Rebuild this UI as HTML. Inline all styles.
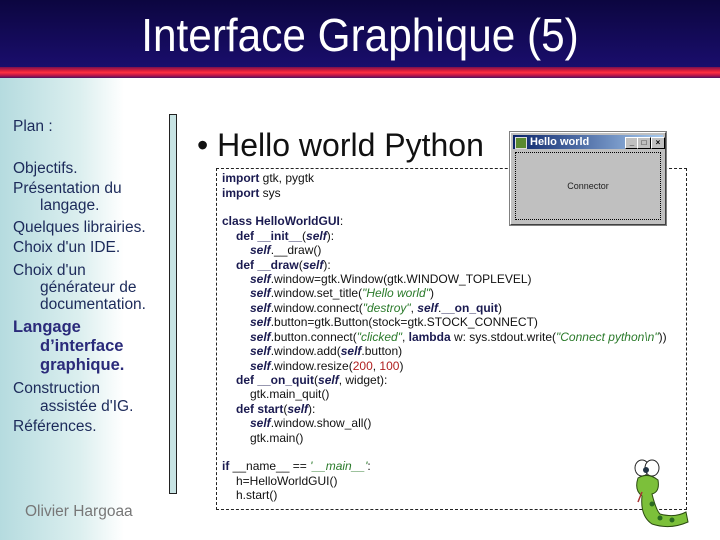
<!DOCTYPE html>
<html><head><meta charset="utf-8"><style>
*{margin:0;padding:0}
body{width:720px;height:540px;position:relative;overflow:hidden;background:#fff;font-family:"Liberation Sans",sans-serif}
.hdr{position:absolute;left:0;top:0;width:720px;height:70px;background:linear-gradient(#0c0640,#1a0e6e)}
.red{position:absolute;left:0;top:67px;width:720px;height:11px;background:linear-gradient(#7a1050,#e0203a 35%,#ff3040 50%,#c01848 75%,#501060)}
.title{position:absolute;left:0;width:720px;top:8px;text-align:center;color:#fff;font-size:46px;transform:scaleX(.92)}
.side{position:absolute;left:0;top:78px;width:200px;height:462px;background:linear-gradient(90deg,#b5dbdf,#dcefef 40%,#fff 62%)}
.s{position:absolute;font-size:15.5px;color:#1c2a5a;white-space:nowrap}
.b{font-weight:bold;font-size:16.5px;color:#2a2a7a}
.bar{position:absolute;left:169px;top:114px;width:6px;height:378px;background:#c7e3e3;border:1px solid #222}
.code{position:absolute;left:216px;top:168px;width:469px;height:340px;border:1px dashed #222}
.c{position:absolute;font-size:12px;color:#111;white-space:nowrap}
.k{font-weight:bold;color:#1a1a50}
.sf{font-weight:bold;font-style:italic;color:#1a1a50}
.st{font-style:italic;color:#2a7a2a}
.n{color:#b02020}
.win{position:absolute;left:510px;top:132px;width:154px;height:91px;background:#c0c0c0;border:1px solid #fff;border-right-color:#404040;border-bottom-color:#404040;outline:1px solid #808080}
.tb{position:absolute;left:2px;top:2px;width:150px;height:14px;background:linear-gradient(90deg,#0a246a,#a6caf0)}
.tb span{position:absolute;left:17px;top:0;color:#fff;font-weight:bold;font-size:11px;line-height:14px}
.ico{position:absolute;left:2px;top:2px;width:10px;height:10px;background:#5a8a30;border:1px solid #ddd}
.btn{position:absolute;top:2px;width:12px;height:10px;background:#c0c0c0;border:1px solid #fff;border-right-color:#000;border-bottom-color:#000;font-size:8px;line-height:10px;text-align:center;color:#000;font-weight:bold}
.inner{position:absolute;left:4px;top:19px;width:144px;height:66px;border:1px dotted #000;font-size:9px;text-align:center;line-height:66px;color:#222}
</style></head><body>
<div class="hdr"></div><div class="red"></div>
<div class="title">Interface Graphique (5)</div>
<div class="side"></div>
<div class="s" style="left:13px;top:118px">Plan :</div>
<div class="s" style="left:13px;top:160px">Objectifs.</div>
<div class="s" style="left:13px;top:180px">Présentation du</div>
<div class="s" style="left:40px;top:197px">langage.</div>
<div class="s" style="left:13px;top:219px">Quelques librairies.</div>
<div class="s" style="left:13px;top:239px">Choix d'un IDE.</div>
<div class="s" style="left:13px;top:262px">Choix d'un</div>
<div class="s" style="left:40px;top:279px">générateur de</div>
<div class="s" style="left:40px;top:296px">documentation.</div>
<div class="s b" style="left:13px;top:318px">Langage</div>
<div class="s b" style="left:40px;top:337px">d’interface</div>
<div class="s b" style="left:40px;top:356px">graphique.</div>
<div class="s" style="left:13px;top:380px">Construction</div>
<div class="s" style="left:40px;top:398px">assistée d'IG.</div>
<div class="s" style="left:13px;top:418px">Références.</div>
<div class="s" style="left:25px;top:503px;color:#777">Olivier Hargoaa</div>
<div class="bar"></div>
<div style="position:absolute;left:197px;top:127px;font-size:32px;color:#111;white-space:nowrap">• Hello world Python</div>
<div class="code"></div>
<div class="c" style="left:222px;top:171px"><span class="k">import</span> gtk, pygtk</div>
<div class="c" style="left:222px;top:186px"><span class="k">import</span> sys</div>
<div class="c" style="left:222px;top:214px"><span class="k">class</span> <span class="k">HelloWorldGUI</span>:</div>
<div class="c" style="left:236px;top:229px"><span class="k">def __init__</span>(<span class="sf">self</span>):</div>
<div class="c" style="left:250px;top:243px"><span class="sf">self</span>.__draw()</div>
<div class="c" style="left:236px;top:258px"><span class="k">def __draw</span>(<span class="sf">self</span>):</div>
<div class="c" style="left:250px;top:272px"><span class="sf">self</span>.window=gtk.Window(gtk.WINDOW_TOPLEVEL)</div>
<div class="c" style="left:250px;top:286px"><span class="sf">self</span>.window.set_title(<span class="st">"Hello world"</span>)</div>
<div class="c" style="left:250px;top:301px"><span class="sf">self</span>.window.connect(<span class="st">"destroy"</span>, <span class="sf">self</span>.<span class="k">__on_quit</span>)</div>
<div class="c" style="left:250px;top:315px"><span class="sf">self</span>.button=gtk.Button(stock=gtk.STOCK_CONNECT)</div>
<div class="c" style="left:250px;top:330px"><span class="sf">self</span>.button.connect(<span class="st">"clicked"</span>, <span class="k">lambda</span> w: sys.stdout.write(<span class="st">"Connect python\n"</span>))</div>
<div class="c" style="left:250px;top:344px"><span class="sf">self</span>.window.add(<span class="sf">self</span>.button)</div>
<div class="c" style="left:250px;top:359px"><span class="sf">self</span>.window.resize(<span class="n">200</span>, <span class="n">100</span>)</div>
<div class="c" style="left:236px;top:373px"><span class="k">def __on_quit</span>(<span class="sf">self</span>, widget):</div>
<div class="c" style="left:250px;top:387px">gtk.main_quit()</div>
<div class="c" style="left:236px;top:402px"><span class="k">def start</span>(<span class="sf">self</span>):</div>
<div class="c" style="left:250px;top:416px"><span class="sf">self</span>.window.show_all()</div>
<div class="c" style="left:250px;top:431px">gtk.main()</div>
<div class="c" style="left:222px;top:459px"><span class="k">if</span> __name__ == <span class="st">'__main__'</span>:</div>
<div class="c" style="left:236px;top:474px">h=HelloWorldGUI()</div>
<div class="c" style="left:236px;top:488px">h.start()</div>
<div class="win"><div class="tb"><div class="ico"></div><span>Hello world</span>
<div class="btn" style="left:112px">_</div><div class="btn" style="left:124px">□</div><div class="btn" style="left:138px">×</div></div>
<div class="inner">Connector</div></div>
<svg style="position:absolute;left:630px;top:450px" width="60" height="80" viewBox="0 0 60 80">
<ellipse cx="12" cy="18" rx="7" ry="8" fill="#fff" stroke="#222"/><ellipse cx="22" cy="18" rx="7" ry="8" fill="#fff" stroke="#222"/>
<circle cx="16" cy="20" r="3" fill="#234"/>
<path d="M8 28 Q18 22 28 30 Q30 42 22 44 Q26 60 30 64 Q45 68 56 62 L58 72 Q40 80 22 74 Q10 66 12 46 Q4 40 8 28Z" fill="#7cc03a" stroke="#2a4a10"/>
<circle cx="22" cy="54" r="2.5" fill="#2a6a20"/><circle cx="30" cy="68" r="2.5" fill="#2a6a20"/><circle cx="42" cy="70" r="2.5" fill="#2a6a20"/>
<path d="M12 42 L8 52" stroke="#a33" stroke-width="1.5"/>
</svg>
</body></html>
